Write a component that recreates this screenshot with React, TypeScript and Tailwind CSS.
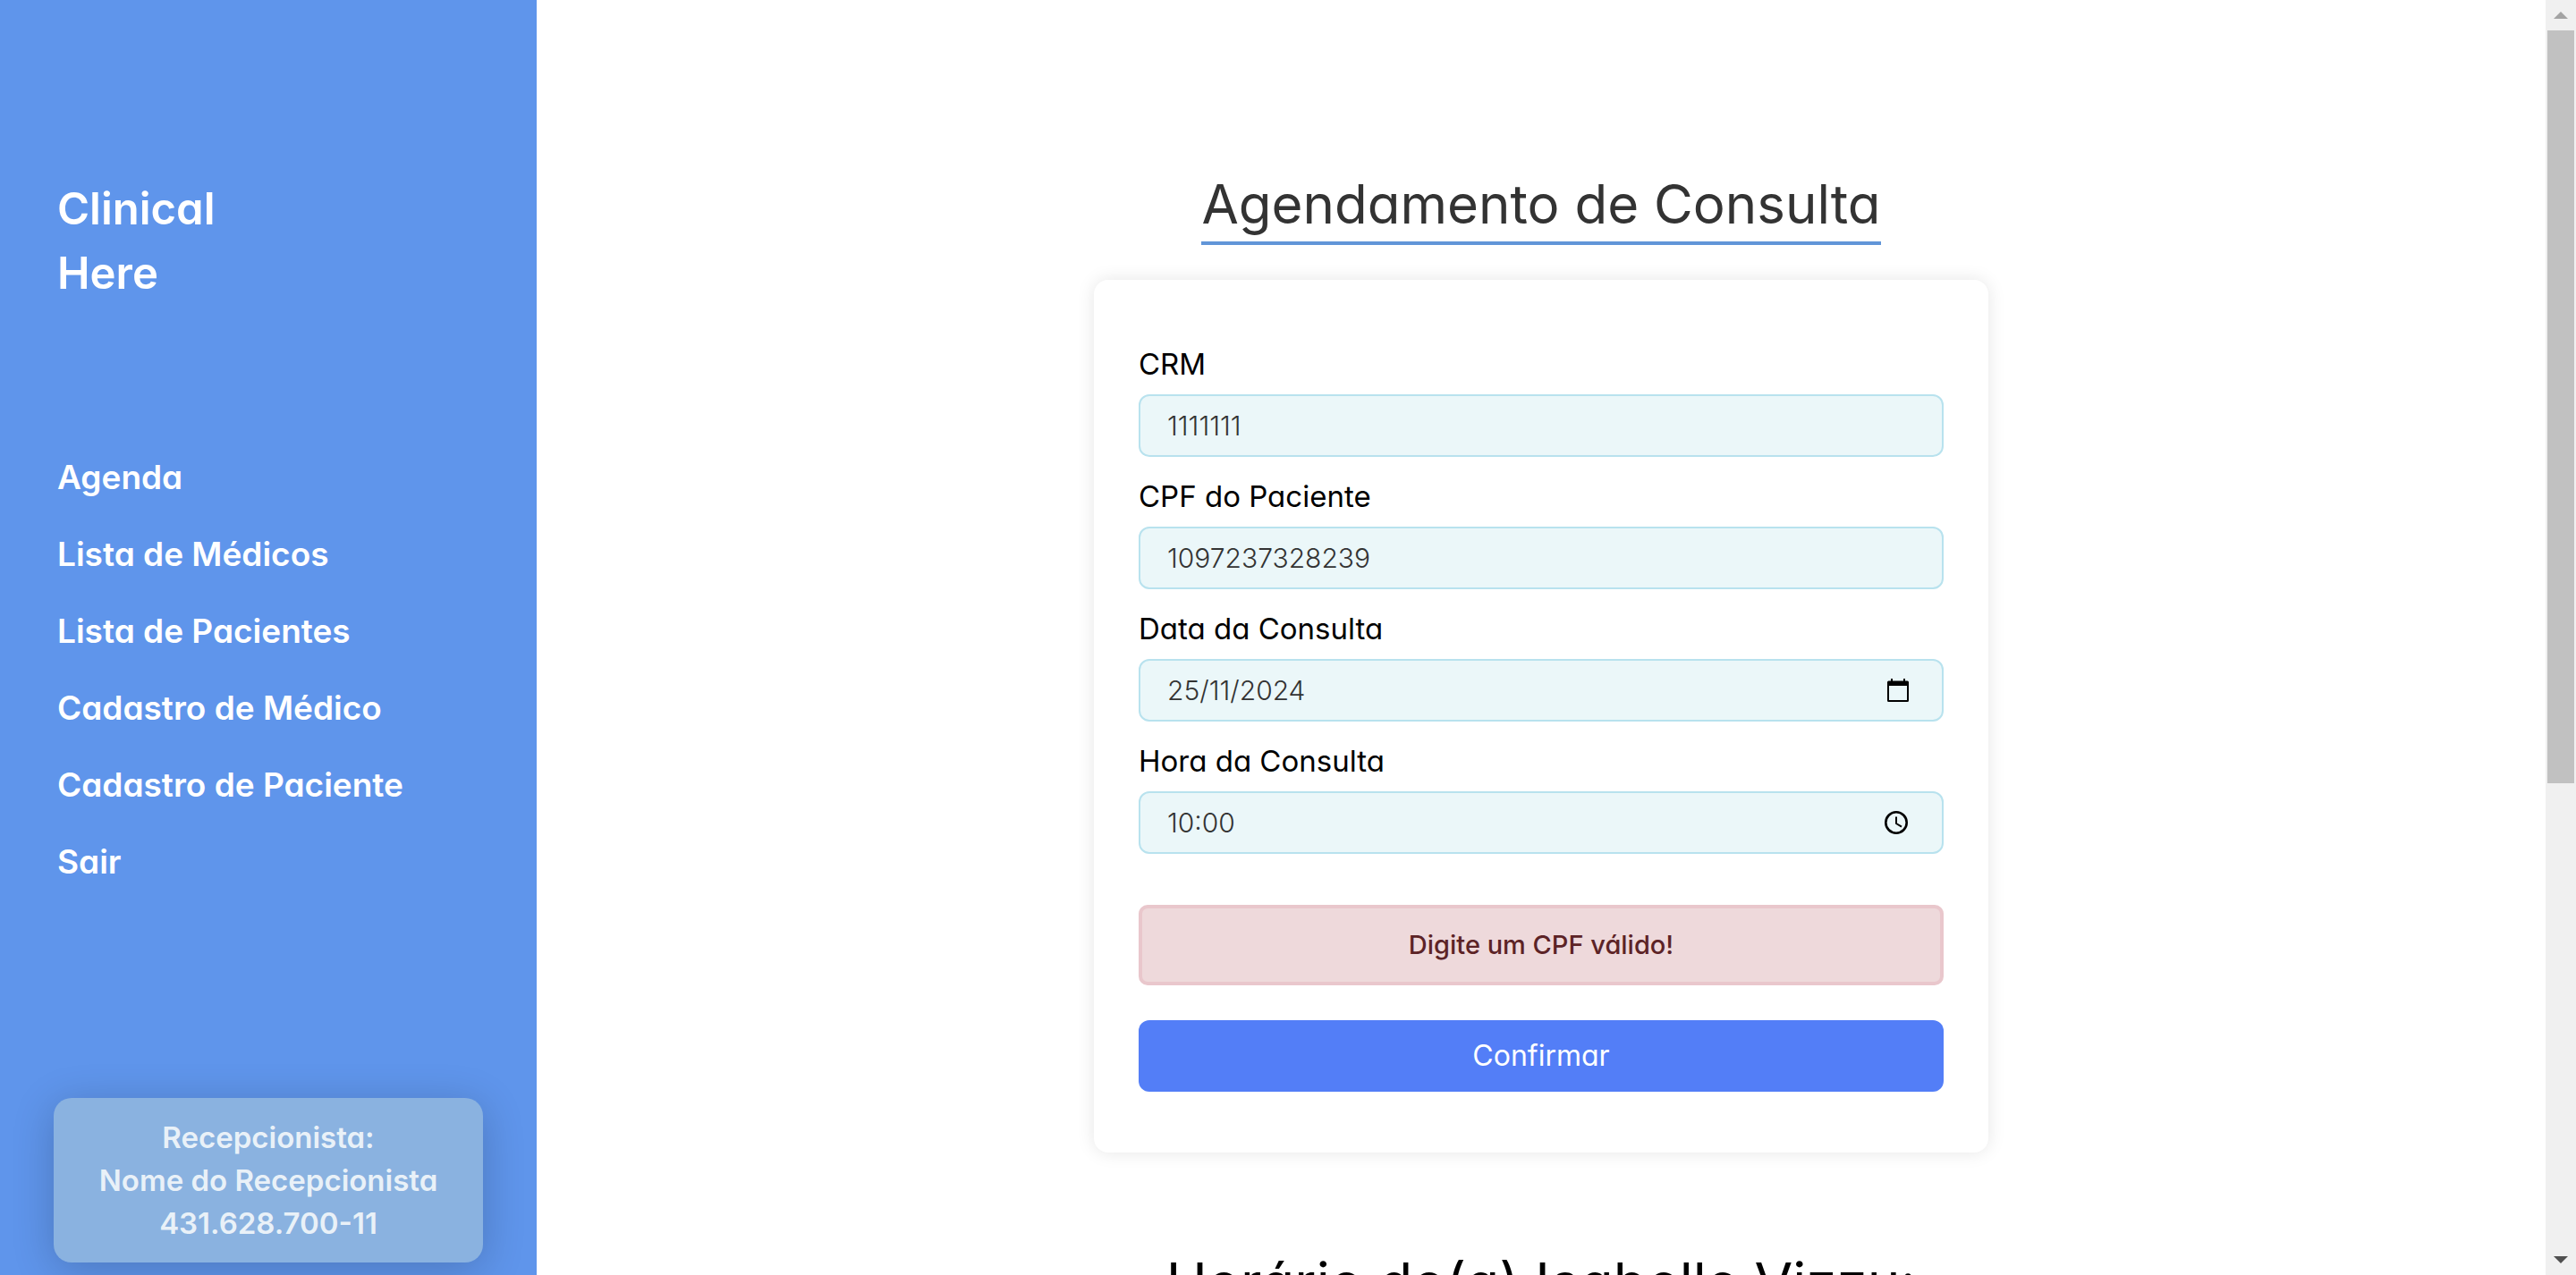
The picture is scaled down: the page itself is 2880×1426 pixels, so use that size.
import { useState, type ReactNode } from 'react';

const links = [
  'Agenda',
  'Lista de Médicos',
  'Lista de Pacientes',
  'Cadastro de Médico',
  'Cadastro de Paciente',
  'Sair',
];

function CalendarIcon() {
  return (
    <svg width="26" height="26" viewBox="0 0 26 26" fill="currentColor" aria-hidden="true">
      <path
        fillRule="evenodd"
        d="M5 0h2v2.500h12V0h2v2.500h2.500A1.500 1.500 0 0 1 25 4v20.500a1.500 1.500 0 0 1-1.500 1.500h-21A1.500 1.500 0 0 1 1 24.500V4a1.500 1.500 0 0 1 1.500-1.500H5zM3 8v16h20V8z"
      />
    </svg>
  );
}

function ClockIcon() {
  return (
    <svg width="26" height="26" viewBox="0 0 26 26" fill="none" stroke="currentColor" aria-hidden="true">
      <circle cx="13" cy="13" r="11.700" strokeWidth="2.600" />
      <path d="M13 6.500v7.500l6 3.600" strokeWidth="2" />
    </svg>
  );
}

type FieldProps = {
  id: string;
  label: string;
  initial: string;
  picker?: { name: string; icon: ReactNode; className: string };
};

function Field({ id, label, initial, picker }: FieldProps) {
  const [value, setValue] = useState(initial);
  return (
    <div>
      <label htmlFor={id} className="mb-[10px] block text-[33px] leading-[48px] text-black">
        {label}
      </label>
      <div className="flex h-[70px] items-center rounded-xl border-2 border-[#b8e2ee] bg-[#ebf7f9] pl-[30px]">
        <input
          id={id}
          value={value}
          onChange={(e) => setValue(e.target.value)}
          className="min-w-0 flex-1 bg-transparent text-[30px] font-light text-[#333333] outline-none"
        />
        {picker && (
          <button type="button" aria-label={picker.name} className={picker.className}>
            {picker.icon}
          </button>
        )}
      </div>
    </div>
  );
}

function Sidebar() {
  return (
    <aside className="flex w-[600px] shrink-0 flex-col bg-[#5f95eb] px-[60px] pt-[198px] pb-[14px] font-semibold text-white">
      <h1 className="w-[200px] px-1 text-[49px] leading-[72px]">Clinical Here</h1>
      <nav className="mt-[149px] px-1">
        <ul>
          {links.map((link) => (
            <li key={link}>
              <a href="#" className="block text-[37px] leading-[86px]">
                {link}
              </a>
            </li>
          ))}
        </ul>
      </nav>
      <div className="mt-auto rounded-[20px] bg-[#8ab2e0] p-5 text-center text-[33px] leading-[48px] text-[#e9f1f8] shadow-[0_8px_48px_rgba(0,0,0,0.2)]">
        <p>Recepcionista:</p>
        <p>Nome do Recepcionista</p>
        <p>431.628.700-11</p>
      </div>
    </aside>
  );
}

function ScrollTrack() {
  return (
    <div aria-hidden="true" className="flex w-[34px] shrink-0 flex-col items-center bg-[#f0f0f0]">
      <div className="flex h-[34px] items-center">
        <svg width="16" height="8" viewBox="0 0 16 8" fill="#a3a3a3">
          <path d="M8 0l8 8H0z" />
        </svg>
      </div>
      <div className="flex w-full flex-1 flex-col px-[2px]">
        <div className="h-[62%] bg-[#c1c1c1]" />
      </div>
      <div className="flex h-[34px] items-center">
        <svg width="16" height="8" viewBox="0 0 16 8" fill="#505050">
          <path d="M0 0h16L8 8z" />
        </svg>
      </div>
    </div>
  );
}

export default function App() {
  return (
    <div className="flex h-screen overflow-hidden bg-white font-['Inter',sans-serif] [font-feature-settings:'cv11']">
      <Sidebar />
      <main className="flex min-w-0 flex-1 flex-col items-center overflow-hidden pt-[186px]">
        <h2 className="shrink-0 border-b-4 border-[#6195d8] text-[60px] leading-[84px] text-[#333333]">
          Agendamento de Consulta
        </h2>
        <form
          onSubmit={(e) => e.preventDefault()}
          className="mt-[39px] w-full max-w-[1000px] shrink-0 rounded-2xl px-[50px] pt-[70px] pb-[68px] shadow-[0_0_20px_rgba(0,0,0,0.1)]"
        >
          <div className="flex flex-col gap-5">
            <Field id="crm" label="CRM" initial="1111111" />
            <Field id="cpf" label="CPF do Paciente" initial="1097237328239" />
            <Field
              id="data"
              label="Data da Consulta"
              initial="25/11/2024"
              picker={{ name: 'Abrir calendário', icon: <CalendarIcon />, className: 'mr-9' }}
            />
            <Field
              id="hora"
              label="Hora da Consulta"
              initial="10:00"
              picker={{ name: 'Escolher horário', icon: <ClockIcon />, className: 'mr-[38px]' }}
            />
          </div>
          <p
            role="alert"
            className="mt-[57px] flex h-[90px] items-center justify-center rounded-[10px] border-4 border-[#e9c7cc] bg-[#eed9db] text-[29px] font-medium text-[#5c2326]"
          >
            Digite um CPF válido!
          </p>
          <button type="submit" className="mt-[39px] h-20 w-full rounded-xl bg-[#537ef7] text-[32px] text-white">
            Confirmar
          </button>
        </form>
        <h2 className="mt-[98px] shrink-0 text-[62px] leading-[96px] text-black">Horário do(a) Isabelle Vizzu:</h2>
      </main>
      <ScrollTrack />
    </div>
  );
}
